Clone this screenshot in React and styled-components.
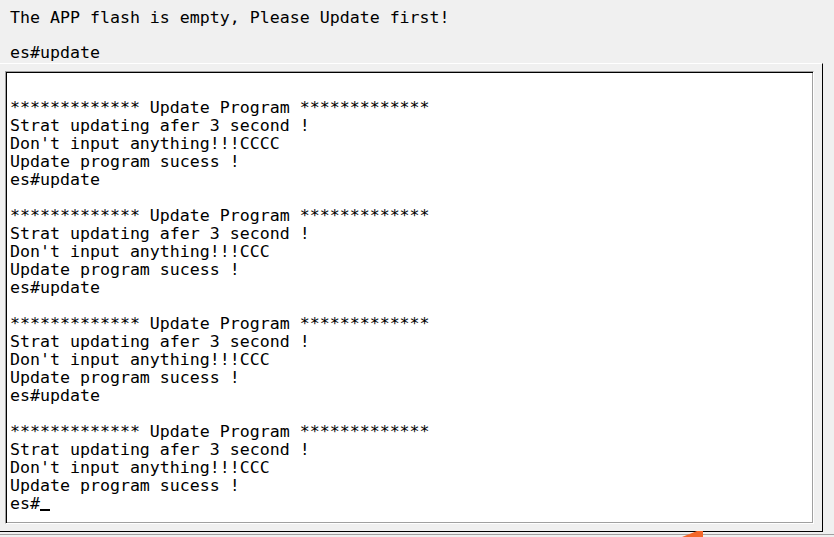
import styled, { createGlobalStyle } from "styled-components";

const GlobalStyle = createGlobalStyle`
  html, body {
    margin: 0;
    padding: 0;
    background: #f0f0f0;
    overflow: hidden;
  }
  body {
    font-family: "DejaVu Sans Mono", "Liberation Mono", monospace;
  }
`;

const Window = styled.div`
  position: relative;
  width: 834px;
  height: 537px;
  background: #f0f0f0;
  display: flex;
  flex-direction: column;
`;

const Header = styled.div`
  height: 63px;
  box-sizing: border-box;
  padding: 9px 0 0 10px;
  display: flex;
  flex-direction: column;
  gap: 17px;
`;

const Line = styled.div`
  font-family: "DejaVu Sans Mono", "Liberation Mono", monospace;
  font-size: 16.6px;
  line-height: 18px;
  height: 18px;
  color: #000;
  white-space: pre;
`;

const Panel = styled.div`
  width: 823px;
  height: 469px;
  box-sizing: border-box;
  border-top: 1px solid #ffffff;
  border-right: 1px solid #000;
  border-bottom: 1px solid #000;
  padding: 7px 8px 7px 5px;
  display: flex;
`;

const Terminal = styled.div`
  flex: 1;
  background: #fff;
  border: 1px solid;
  border-color: #a0a0a0 #ffffff #ffffff #a0a0a0;
  box-shadow: inset 1px 1px 0 #000, inset -1px -1px 0 #a0a0a0;
  padding: 9px 2px 0 4px;
  overflow: hidden;
`;

const Cursor = styled.span`
  display: inline-block;
  width: 10px;
  height: 2px;
  background: #000;
  vertical-align: -2px;
`;

const Footer = styled.div`
  margin-top: 2px;
  border-top: 1px solid #a0a0a0;
  flex: 1;
`;

const Wedge = styled.svg`
  position: absolute;
  left: 682px;
  top: 531px;
`;

const block = [
  "************* Update Program *************",
  "Strat updating afer 3 second !",
];

const tails = ["CCCC", "CCC", "CCC", "CCC"];

function App() {
  const lines = [""];
  tails.forEach((t, i) => {
    lines.push(...block);
    lines.push("Don't input anything!!!" + t);
    lines.push("Update program sucess !");
    lines.push(i < tails.length - 1 ? "es#update" : null);
    if (i < tails.length - 1) lines.push("");
  });

  return (
    <>
      <GlobalStyle />
      <Window>
        <Header>
          <Line>The APP flash is empty, Please Update first!</Line>
          <Line>es#update</Line>
        </Header>
        <Panel>
          <Terminal>
            {lines.map((l, i) =>
              l === null ? (
                <Line key={i}>
                  es#<Cursor />
                </Line>
              ) : (
                <Line key={i}>{l}</Line>
              )
            )}
          </Terminal>
        </Panel>
        <Footer />
        <Wedge width="22" height="6" viewBox="0 0 22 6">
          <polygon points="15,0 21,0 21,6 0,6" fill="#f4672a" />
        </Wedge>
      </Window>
    </>
  );
}

export default App;
